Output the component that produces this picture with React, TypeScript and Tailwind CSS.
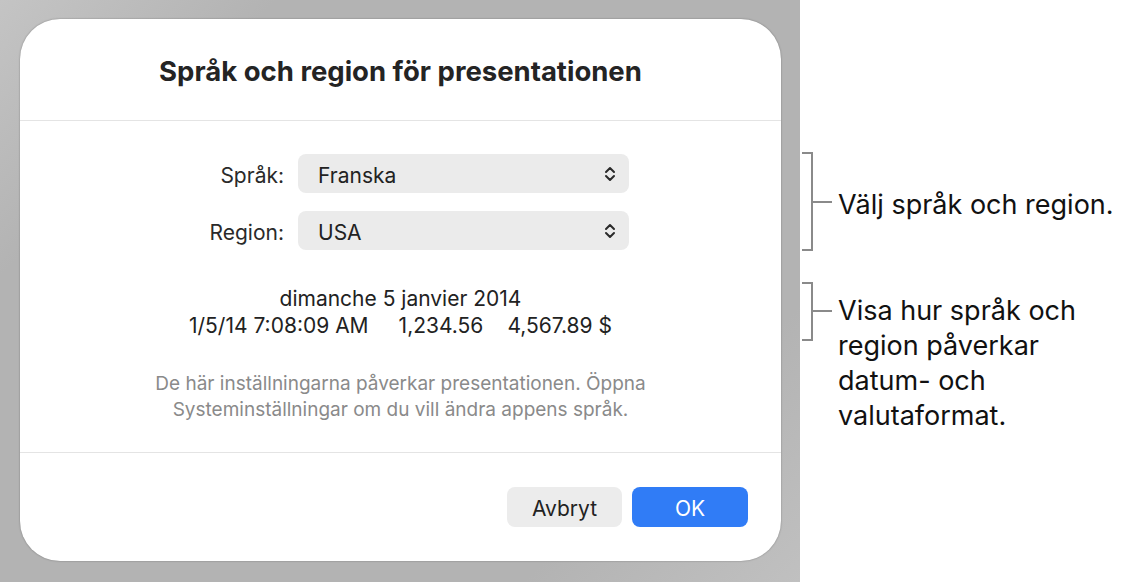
import React from "react";

function Chevrons() {
  return (
    <svg width="14" height="18" viewBox="0 0 14 18" fill="none" stroke="#2a2a2a" strokeWidth="2" strokeLinecap="round" strokeLinejoin="round">
      <path d="M3 7 L7 3 L11 7" />
      <path d="M3 11 L7 15 L11 11" />
    </svg>
  );
}

function Popup({ value }: { value: string }) {
  return (
    <div className="w-[331px] h-[39px] rounded-[8px] bg-[#ebebeb] flex items-center justify-between pl-[20px] pr-[12px] text-[21px] text-[#222]">
      <span className="pt-[4px]">{value}</span>
      <Chevrons />
    </div>
  );
}

export default function App() {
  return (
    <div className="flex w-[1129px] h-[582px] bg-white overflow-hidden" style={{ fontFamily: "Inter, 'Noto Sans', sans-serif" }}>
      <div className="w-[800px] h-[582px] shrink-0 bg-[linear-gradient(135deg,#c4c4c4_0%,#b3b3b3_20%,#b3b3b3_80%,#c0c0c0_100%)] pt-[19px] pl-[20px]">
        <div className="w-[761px] h-[542px] bg-white rounded-[40px] shadow-[0_0_2px_rgba(0,0,0,0.35)] flex flex-col">
          <div className="h-[102px] flex items-center justify-center border-b border-[#e4e4e4] shrink-0">
            <h1 className="text-[27.5px] font-bold text-[#242424] mt-[4px]">Språk och region för presentationen</h1>
          </div>
          <div className="h-[332px] border-b border-[#e4e4e4] flex flex-col shrink-0">
            <div className="mt-[33px] ml-[164px] grid grid-cols-[100px_331px] gap-x-[14px] gap-y-[18px] items-center text-[21px] text-[#2a2a2a]">
              <span className="text-right pt-[4px]">Språk:</span>
              <Popup value="Franska" />
              <span className="text-right pt-[4px]">Region:</span>
              <Popup value="USA" />
            </div>
            <div className="mt-[35px] text-[21px] leading-[27px] text-[#222] flex flex-col items-center">
              <span>dimanche 5 janvier 2014</span>
              <div className="flex">
                <span className="mr-[30px]">1/5/14 7:08:09 AM</span>
                <span className="mr-[24px]">1,234.56</span>
                <span>4,567.89 $</span>
              </div>
            </div>
            <div className="mt-[32px] text-[19px] leading-[26px] text-[#8a8a8a] text-center">
              <p>De här inställningarna påverkar presentationen. Öppna</p>
              <p>Systeminställningar om du vill ändra appens språk.</p>
            </div>
          </div>
          <div className="flex-1 flex justify-end items-start pt-[34px] pr-[33px] gap-[10px]">
            <button className="w-[115px] h-[40px] rounded-[8px] bg-[#ececec] text-[21px] text-[#222] pt-[4px]">Avbryt</button>
            <button className="w-[116px] h-[40px] rounded-[8px] bg-[#307cf6] text-[21px] text-white pt-[4px]">OK</button>
          </div>
        </div>
      </div>
      <div className="flex-1 flex flex-col text-[#111]">
        <div className="mt-[152px] flex items-center">
          <div className="ml-[2px] w-[11px] h-[99px] border-t-[2px] border-r-[2px] border-b-[2px] border-[#8a8a8a]" />
          <div className="w-[20px] h-[2px] bg-[#8a8a8a] ml-[-1px]" />
          <span className="ml-[6px] text-[27px] mt-[7px]">Välj språk och region.</span>
        </div>
        <div className="mt-[31px] flex items-start">
          <div className="ml-[2px] w-[11px] h-[59px] border-t-[2px] border-r-[2px] border-b-[2px] border-[#8a8a8a] shrink-0" />
          <div className="w-[20px] h-[2px] bg-[#8a8a8a] ml-[-1px] mt-[28px] shrink-0" />
          <div className="ml-[6px] text-[27px] leading-[35px] mt-[11px]">
            <p>Visa hur språk och</p>
            <p>region påverkar</p>
            <p>datum- och</p>
            <p>valutaformat.</p>
          </div>
        </div>
      </div>
    </div>
  );
}
